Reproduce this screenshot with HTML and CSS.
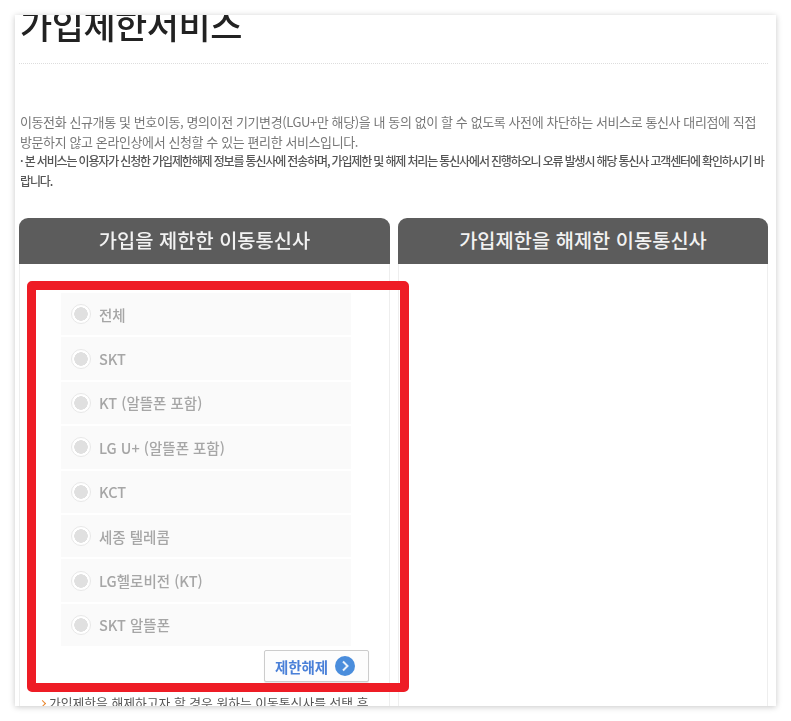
FILE: index.html
```html
<!DOCTYPE html>
<html lang="ko">
<head>
  <meta charset="UTF-8">
  <meta name="viewport" content="width=device-width, initial-scale=1.0">
  <title>가입제한서비스</title>
  <link rel="stylesheet" href="styles.css">
</head>
<body>
  <div class="card">
    <h1 class="title">가입제한서비스</h1>

    <div class="intro">
      <p>이동전화 신규개통 및 번호이동, 명의이전 기기변경(LGU+만 해당)을 내 동의 없이 할 수 없도록 사전에 차단하는 서비스로 통신사 대리점에 직접 방문하지 않고 온라인상에서 신청할 수 있는 편리한 서비스입니다.</p>
      <p class="notice">· 본 서비스는 이용자가 신청한 가입제한해제 정보를 통신사에 전송하며, 가입제한 및 해제 처리는 통신사에서 진행하오니 오류 발생시 해당 통신사 고객센터에 확인하시기 바랍니다.</p>
    </div>

    <div class="panels">
      <!-- Blocked carriers -->
      <div class="panel">
        <h2 class="panel-head">가입을 제한한 이동통신사</h2>
        <div class="panel-body">
          <ul class="carriers">
            <li class="carrier"><span class="radio"></span>전체</li>
            <li class="carrier"><span class="radio"></span>SKT</li>
            <li class="carrier"><span class="radio"></span>KT (알뜰폰 포함)</li>
            <li class="carrier"><span class="radio"></span>LG U+ (알뜰폰 포함)</li>
            <li class="carrier"><span class="radio"></span>KCT</li>
            <li class="carrier"><span class="radio"></span>세종 텔레콤</li>
            <li class="carrier"><span class="radio"></span>LG헬로비전 (KT)</li>
            <li class="carrier"><span class="radio"></span>SKT 알뜰폰</li>
          </ul>
          <div class="actions">
            <button class="btn" type="button">제한해제
              <svg class="btn-icon" width="20" height="20" viewBox="0 0 20 20">
                <circle cx="10" cy="10" r="10" fill="#4a8ddc"/>
                <path d="M8 5.5 12.5 10 8 14.5" fill="none" stroke="#e8f1fb" stroke-width="2"/>
              </svg>
            </button>
          </div>
          <p class="hint">가입제한을 해제하고자 할 경우 원하는 이동통신사를 선택 후</p>
        </div>
      </div>

      <!-- Released carriers -->
      <div class="panel">
        <h2 class="panel-head">가입제한을 해제한 이동통신사</h2>
        <div class="panel-body"></div>
      </div>
    </div>

    <!-- Annotation -->
    <div class="highlight"></div>
  </div>
</body>
</html>
```

FILE: styles.css
```css
/* General Reset */
* {
  box-sizing: border-box;
}

body {
  margin: 0;
  padding: 15px;
  height: 721px;
  overflow: hidden;
  background-color: #fff;
  font-family: "Noto Sans CJK KR", "Noto Sans", sans-serif;
}

/* Card */
.card {
  position: relative;
  width: 761px;
  height: 691px;
  padding: 0 8px 0 4px;
  overflow: hidden;
  background-color: #fff;
  box-shadow: 0 1px 6px rgba(0, 0, 0, 0.22);
  filter: blur(0.35px);
}

.title {
  height: 63px;
  margin: -14px 0 0;
  padding-left: 1px;
  border-bottom: 1px dotted #ddd;
  font-size: 35px;
  font-weight: 500;
  line-height: 46px;
  letter-spacing: -0.5px;
  color: #222;
}

/* Intro Text */
.intro {
  margin-top: 48px;
  padding-left: 1px;
  font-size: 13px;
  line-height: 19.5px;
  letter-spacing: -0.4px;
  color: #777;
}

.intro p {
  margin: 0;
}

.intro .notice {
  font-size: 12px;
  font-weight: 500;
  letter-spacing: -1.15px;
  color: #555;
}

/* Panels */
.panels {
  display: flex;
  gap: 8px;
  margin-top: 28px;
}

.panel {
  width: 371px;
}

.panel-head {
  height: 46px;
  margin: 0;
  border-radius: 9px 9px 0 0;
  background-color: #5c5c5c;
  font-size: 19.8px;
  font-weight: 500;
  line-height: 44px;
  text-align: center;
  color: #f2f2f2;
}

.panel-body {
  height: 470px;
  padding: 29px 38px 0 41px;
  border-left: 1px solid #eee;
  border-right: 1px solid #eee;
}

/* Carrier List */
.carriers {
  display: flex;
  flex-direction: column;
  gap: 2px;
  margin: 0;
  padding: 0;
  list-style: none;
}

.carrier {
  display: flex;
  align-items: center;
  gap: 8px;
  height: 42.4px;
  padding-left: 10px;
  background-color: #fafafa;
  font-size: 14.5px;
  font-weight: 500;
  color: #a6a6a6;
}

.radio {
  display: block;
  width: 20px;
  height: 20px;
  border: 1px solid #e8e8e8;
  border-radius: 50%;
  background-color: #fff;
  background-image: radial-gradient(circle, #e0e0e0 6.5px, transparent 7px);
}

/* Button */
.actions {
  display: flex;
  justify-content: flex-end;
  margin: 4px -18px 0 0;
}

.btn {
  display: flex;
  align-items: center;
  gap: 7px;
  width: 105px;
  height: 32px;
  padding: 0 0 0 10px;
  border: 1px solid #ccc;
  border-radius: 2px;
  background-color: #fdfdfd;
  box-shadow: 0 1px 1px rgba(0, 0, 0, 0.1);
  font-family: inherit;
  font-size: 14.5px;
  font-weight: 700;
  letter-spacing: -0.1px;
  color: #4a80d8;
}

.btn-icon {
  flex: none;
}

.hint {
  position: relative;
  width: 340px;
  margin: 11px 0 0 -12px;
  font-size: 12.8px;
  line-height: 20px;
  white-space: nowrap;
  color: #555;
}

.hint::before {
  content: "";
  position: absolute;
  left: -9px;
  top: 8px;
  width: 4px;
  height: 4px;
  border-top: 1.5px solid #e8862c;
  border-right: 1.5px solid #e8862c;
  transform: rotate(45deg);
}

/* Red Annotation */
.highlight {
  position: absolute;
  left: 12px;
  top: 266px;
  width: 382px;
  height: 411px;
  border: 9px solid #ee1c25;
  border-radius: 5px;
}
```
